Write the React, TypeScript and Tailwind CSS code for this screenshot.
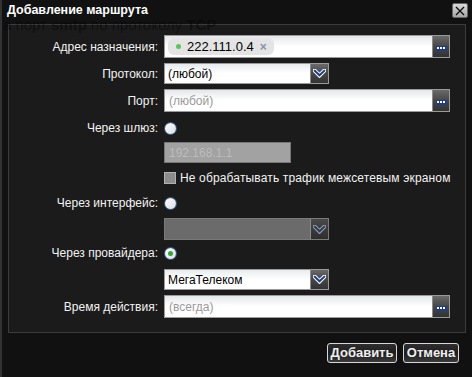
import React from "react";

const font = { fontFamily: '"Liberation Sans", Arial, sans-serif' };

function DotsButton() {
  return (
    <div className="w-[17px] h-full flex items-center justify-center bg-gradient-to-b from-[#6a6a6a] via-[#474747] to-[#333] border-l border-[#8a8a8a] shrink-0">
      <div className="w-[11px] h-[5px] bg-[#1d3c8c] flex items-center justify-center gap-[1px] mt-[3px]">
        <div className="w-[2px] h-[2px] bg-white" />
        <div className="w-[2px] h-[2px] bg-white" />
        <div className="w-[2px] h-[2px] bg-white" />
      </div>
    </div>
  );
}

function Chevron({ dim }: { dim?: boolean }) {
  return (
    <svg width="13" height="9" viewBox="0 0 13 9">
      <path
        d="M1.5 1.5 L6.5 6.5 L11.5 1.5"
        fill="none"
        stroke={dim ? "#9aa0aa" : "#ffffff"}
        strokeWidth="4"
        strokeLinecap="square"
        strokeLinejoin="miter"
      />
      <path
        d="M1.8 1.8 L6.5 6.3 L11.2 1.8"
        fill="none"
        stroke={dim ? "#2c3a5c" : "#1d3c8c"}
        strokeWidth="2"
        strokeLinecap="square"
      />
    </svg>
  );
}

function DropButton({ dim }: { dim?: boolean }) {
  return (
    <div
      className={
        "w-[18px] h-full flex items-center justify-center border-l border-[#8a8a8a] shrink-0 " +
        (dim
          ? "bg-gradient-to-b from-[#4a4a4a] to-[#2e2e2e]"
          : "bg-gradient-to-b from-[#6a6a6a] via-[#474747] to-[#333]")
      }
    >
      <Chevron dim={dim} />
    </div>
  );
}

function Radio({ checked }: { checked?: boolean }) {
  return (
    <div className="w-[11px] h-[11px] rounded-full bg-gradient-to-br from-white to-[#d8dde6] shadow-[0_0_0_1px_#3b5a8c] flex items-center justify-center">
      {checked && <div className="w-[5px] h-[5px] rounded-full bg-[#2faa2f]" />}
    </div>
  );
}

function Label({ children }: { children: React.ReactNode }) {
  return (
    <div className="w-[149px] shrink-0 text-right text-[12px] text-[#f2f2f2] pr-[0px]">{children}</div>
  );
}

export default function App() {
  return (
    <div
      className="relative w-[472px] h-[377px] bg-[#111111] border-l-2 border-[#333] overflow-hidden flex flex-col"
      style={font}
    >
      {/* Title bar */}
      <div className="relative h-[24px] flex items-center justify-between pl-[5px] pr-[4px] shrink-0">
        <div className="text-[12.5px] leading-none font-bold text-white mb-[4px]">Добавление маршрута</div>
        <div className="w-[16px] h-[15px] bg-gradient-to-b from-[#d8d8d8] to-[#a8a8a8] border border-[#666] rounded-[2px] flex items-center justify-center mb-[3px]">
          <svg width="10" height="10" viewBox="0 0 10 10">
            <path d="M1 1 L9 9 M9 1 L1 9" stroke="#111" strokeWidth="1.4" />
          </svg>
        </div>
      </div>

      {/* Panel */}
      <div className="relative ml-[6px] w-[458px] h-[309px] border border-[#3c3c3c] bg-[#1b1b1b] flex flex-col shrink-0">
        {/* Row 1 */}
        <div className="flex items-center mt-[10px] h-[23px]">
          <Label>Адрес назначения:</Label>
          <div className="ml-[6px] w-[286px] h-full flex border border-[#9a9a9a] bg-gradient-to-b from-[#e4e8ea] via-white to-white">
            <div className="flex-1 flex items-center pl-[3px]">
              <div className="h-[17px] w-[106px] rounded-[6px] bg-[#e4e4e4] flex items-center pl-[8px]">
                <div className="w-[5px] h-[5px] rounded-full bg-[#5fc45f]" />
                <span className="ml-[6px] text-[13px] text-black">222.111.0.4</span>
                <span className="ml-[6px] text-[12px] font-bold text-[#8a93a8] leading-none">×</span>
              </div>
            </div>
            <DotsButton />
          </div>
        </div>

        {/* Row 2 */}
        <div className="flex items-center mt-[5px] h-[21px]">
          <Label>Протокол:</Label>
          <div className="ml-[6px] w-[165px] h-full flex border border-[#9a9a9a] bg-gradient-to-b from-[#e8ecee] via-white to-white">
            <div className="flex-1 flex items-center pl-[3px] text-[12px] text-black">(любой)</div>
            <DropButton />
          </div>
        </div>

        {/* Row 3 */}
        <div className="flex items-center mt-[5px] h-[23px]">
          <Label>Порт:</Label>
          <div className="ml-[6px] w-[286px] h-full flex border border-[#9a9a9a] bg-gradient-to-b from-[#e4e8ea] via-white to-white">
            <div className="flex-1 flex items-center pl-[4px] text-[12px] text-[#9a9a9a]">(любой)</div>
            <DotsButton />
          </div>
        </div>

        {/* Row 4 */}
        <div className="flex items-center mt-[6px] h-[20px]">
          <Label>Через шлюз:</Label>
          <div className="ml-[7px]">
            <Radio />
          </div>
        </div>

        {/* Row 5 */}
        <div className="flex items-center mt-[4px] h-[21px]">
          <div className="w-[149px] shrink-0" />
          <div className="ml-[6px] w-[127px] h-full border border-[#777] bg-[#a2a2a2] flex items-center pl-[4px] text-[12px] text-[#bcbcbc]">
            192.168.1.1
          </div>
        </div>

        {/* Row 6 */}
        <div className="flex items-center mt-[8px] h-[14px]">
          <div className="w-[149px] shrink-0" />
          <div className="ml-[6px] w-[12px] h-[12px] bg-[#8c8c8c] border border-[#b0b0b0]" />
          <div className="ml-[4px] text-[12px] text-[#f2f2f2] tracking-[0.15px]">
            Не обрабатывать трафик межсетевым экраном
          </div>
        </div>

        {/* Row 7 */}
        <div className="flex items-center mt-[8px] h-[20px]">
          <Label>Через интерфейс:</Label>
          <div className="ml-[7px]">
            <Radio />
          </div>
        </div>

        {/* Row 8 */}
        <div className="flex items-center mt-[5px] h-[22px]">
          <div className="w-[149px] shrink-0" />
          <div className="ml-[6px] w-[165px] h-full flex border border-[#7a7a7a] bg-[#6b6b6b]">
            <div className="flex-1" />
            <DropButton dim />
          </div>
        </div>

        {/* Row 9 */}
        <div className="flex items-center mt-[3px] h-[20px]">
          <Label>Через провайдера:</Label>
          <div className="ml-[7px]">
            <Radio checked />
          </div>
        </div>

        {/* Row 10 */}
        <div className="flex items-center mt-[6px] h-[21px]">
          <div className="w-[149px] shrink-0" />
          <div className="ml-[6px] w-[165px] h-full flex border border-[#9a9a9a] bg-gradient-to-b from-[#e8ecee] via-white to-white">
            <div className="flex-1 flex items-center pl-[3px] text-[12px] text-black">МегаТелеком</div>
            <DropButton />
          </div>
        </div>

        {/* Row 11 */}
        <div className="flex items-center mt-[5px] h-[23px]">
          <Label>Время действия:</Label>
          <div className="ml-[6px] w-[286px] h-full flex border border-[#9a9a9a] bg-gradient-to-b from-[#e4e8ea] via-white to-white">
            <div className="flex-1 flex items-center pl-[4px] text-[12px] text-[#9a9a9a]">(всегда)</div>
            <DotsButton />
          </div>
        </div>
      </div>

      {/* Footer buttons */}
      <div className="flex justify-end gap-[6px] pr-[13px] mt-[10px]">
        <button className="w-[70px] h-[20px] rounded-[3px] border border-[#d8d8d8] bg-gradient-to-b from-[#2e2e2e] via-[#1e1e1e] to-[#3a3a3a] text-[13px] font-bold text-[#eeeeee] flex items-center justify-center">
          Добавить
        </button>
        <button className="w-[56px] h-[20px] rounded-[3px] border border-[#d8d8d8] bg-gradient-to-b from-[#2e2e2e] via-[#1e1e1e] to-[#3a3a3a] text-[13px] font-bold text-[#eeeeee] flex items-center justify-center">
          Отмена
        </button>
      </div>

      {/* Ghost text of the page behind the translucent dialog */}
      <div className="absolute left-[1px] top-[17px] text-[15px] leading-none text-black/40 pointer-events-none whitespace-nowrap">
        а порт <b>smtp</b> по протоколу <b>TCP</b>
      </div>
    </div>
  );
}
